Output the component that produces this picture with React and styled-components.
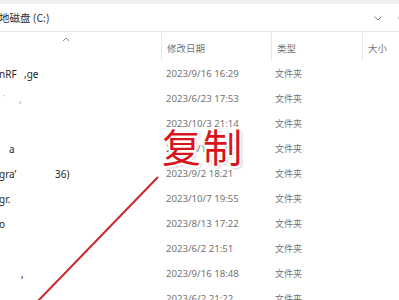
import styled, { createGlobalStyle } from 'styled-components';

const GlobalStyle = createGlobalStyle`
  html, body {
    margin: 0;
    padding: 0;
    background: #ffffff;
    overflow: hidden;
  }
  body {
    font-family: "Noto Sans", "Noto Sans CJK SC", sans-serif;
  }
`;

const Page = styled.div`
  position: relative;
  width: 399px;
  height: 300px;
  overflow: hidden;
  background: #ffffff;
`;

const TopStrip = styled.div`
  height: 4px;
  background: #efefef;
`;

const AddressBar = styled.div`
  height: 27px;
  display: flex;
  align-items: center;
  border-bottom: 1px solid #e6e6e6;
  color: #2b2b2b;
  font-size: 10.5px;
  font-family: "Noto Sans CJK SC", sans-serif;
`;

const Path = styled.div`
  flex: 1;
  margin-left: -1px;
`;

const BarButton = styled.div`
  display: flex;
  align-items: center;
  color: #8a8a8a;
  margin-right: ${(p) => p.$mr || 0}px;
`;

const Grid = styled.div`
  display: grid;
  grid-template-columns: 161px 110px 91px 1fr;
`;

const HeaderRow = styled(Grid)`
  height: 29px;
`;

const HeaderCell = styled.div`
  position: relative;
  display: flex;
  align-items: center;
  padding: 3px 0 0 5px;
  font-family: "Noto Sans CJK SC", sans-serif;
  font-size: 9.5px;
  color: #727272;
  border-left: ${(p) => (p.$first ? 'none' : '1px solid #e8e8e8')};
`;

const SortCaret = styled.svg`
  position: absolute;
  left: 61px;
  top: 4px;
`;

const Row = styled(Grid)`
  height: 25px;
  align-items: center;
`;

const NameCell = styled.div`
  position: relative;
  height: 25px;
  font-size: 10px;
  color: #1f1f1f;
`;

const Frag = styled.span`
  position: absolute;
  left: ${(p) => p.$x}px;
  top: 6px;
  color: ${(p) => (p.$light ? '#9a9a9a' : '#1f1f1f')};
`;

const DateCell = styled.div`
  padding-left: 5px;
  font-size: 9.65px;
  color: #727272;
  white-space: nowrap;
`;

const TypeCell = styled.div`
  padding-left: 4px;
  font-family: "Noto Sans CJK SC", sans-serif;
  font-size: 9px;
  color: #727272;
`;

const Overlay = styled.svg`
  position: absolute;
  left: 0;
  top: 0;
  pointer-events: none;
`;

const Stamp = styled.div`
  position: absolute;
  left: 162px;
  top: 122px;
  font-family: "Noto Sans CJK SC", sans-serif;
  font-size: 39px;
  font-weight: 400;
  letter-spacing: 2px;
  line-height: 1.2;
  color: #d8141c;
  text-shadow:
    -2px 0 0 #fff, 2px 0 0 #fff, 0 -2px 0 #fff, 0 2px 0 #fff,
    -1.5px -1.5px 0 #fff, 1.5px 1.5px 0 #fff, -1.5px 1.5px 0 #fff, 1.5px -1.5px 0 #fff,
    2px 2px 3px rgba(0, 0, 0, 0.35);
`;

const rows = [
  { date: '2023/9/16 16:29', name: [{ x: -1, t: 'nRF' }, { x: 24, t: ',ge' }] },
  { date: '2023/6/23 17:53', name: [{ x: 3, t: '\u02d9', light: true }, { x: 19, t: ',', light: true }] },
  { date: '2023/10/3 21:14', name: [] },
  { date: '2023/4/12 10:25', name: [{ x: 9, t: 'a' }] },
  { date: '2023/9/2 18:21', name: [{ x: -1, t: 'gra\u2019' }, { x: 55, t: '36)' }] },
  { date: '2023/10/7 19:55', name: [{ x: -1, t: 'gr.' }] },
  { date: '2023/8/13 17:22', name: [{ x: -1, t: 'o' }] },
  { date: '2023/6/2 21:51', name: [] },
  { date: '2023/9/16 18:48', name: [{ x: 21, t: ',' }] },
  { date: '2023/6/2 21:22', name: [] },
];

export default function App() {
  return (
    <Page>
      <GlobalStyle />
      <TopStrip />
      <AddressBar>
        <Path>地磁盘 (C:)</Path>
        <BarButton $mr={14}>
          <svg width="10" height="10" viewBox="0 0 10 10">
            <path d="M1.5 3.5 L5 7 L8.5 3.5" fill="none" stroke="#7d7d7d" strokeWidth="1" />
          </svg>
        </BarButton>
        <BarButton $mr={-10}>
          <svg width="12" height="12" viewBox="0 0 12 12">
            <path d="M10 6 A4 4 0 1 1 8.6 2.9" fill="none" stroke="#8a8a8a" strokeWidth="1" />
          </svg>
        </BarButton>
      </AddressBar>
      <HeaderRow>
        <HeaderCell $first>
          <SortCaret width="10" height="6" viewBox="0 0 10 6">
            <path d="M2 5 L5 2 L8 5" fill="none" stroke="#8a8a8a" strokeWidth="1" />
          </SortCaret>
        </HeaderCell>
        <HeaderCell>修改日期</HeaderCell>
        <HeaderCell>类型</HeaderCell>
        <HeaderCell>大小</HeaderCell>
      </HeaderRow>
      {rows.map((r, i) => (
        <Row key={i}>
          <NameCell>
            {r.name.map((f, j) => (
              <Frag key={j} $x={f.x} $light={f.light}>{f.t}</Frag>
            ))}
          </NameCell>
          <DateCell>{r.date}</DateCell>
          <TypeCell>文件夹</TypeCell>
          <div />
        </Row>
      ))}
      <Overlay width="399" height="300" viewBox="0 0 399 300">
        <line x1="158" y1="177" x2="37" y2="302" stroke="#c9262b" strokeWidth="2" />
      </Overlay>
      <Stamp>复制</Stamp>
    </Page>
  );
}
